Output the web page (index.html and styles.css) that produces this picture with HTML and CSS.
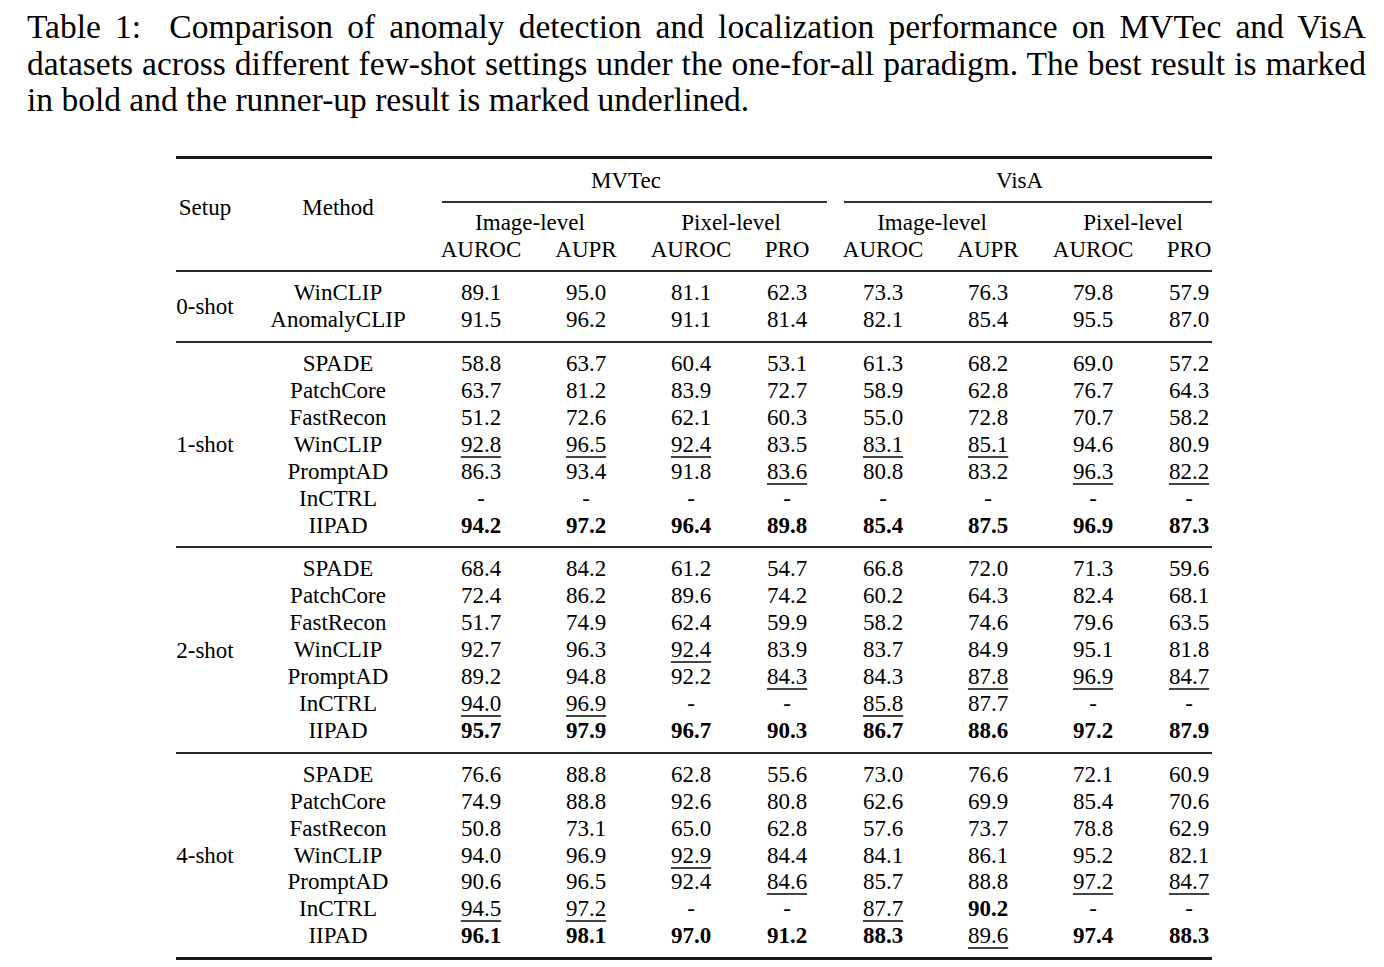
FILE: index.html
```html
<!DOCTYPE html>
<html lang="en">
<head>
<meta charset="utf-8">
<title>Table 1</title>
<link rel="stylesheet" href="styles.css">
</head>
<body>
<div class="page">
  <p class="caption">Table 1:&nbsp; Comparison of anomaly detection and localization performance on MVTec and VisA datasets across different few-shot settings under the one-for-all paradigm. The best result is marked in bold and the runner-up result is marked underlined.</p>

  <table class="results">
    <colgroup>
      <col class="w-setup"><col class="w-method">
      <col class="w-auroc"><col class="w-aupr"><col class="w-auroc"><col class="w-pro">
      <col class="w-auroc"><col class="w-aupr"><col class="w-auroc"><col class="w-pro-last">
    </colgroup>
    <thead>
      <tr class="h-dataset">
        <th rowspan="4" class="setup head-left">Setup</th>
        <th rowspan="4" class="method head-left">Method</th>
        <th colspan="4">MVTec</th>
        <th colspan="4">VisA</th>
      </tr>
      <tr class="h-cmid">
        <td colspan="4" class="cmid"><div class="cmid-line"></div></td>
        <td colspan="4" class="cmid"><div class="cmid-line"></div></td>
      </tr>
      <tr class="h-level">
        <th colspan="2">Image-level</th>
        <th colspan="2">Pixel-level</th>
        <th colspan="2">Image-level</th>
        <th colspan="2" class="last">Pixel-level</th>
      </tr>
      <tr class="h-metric">
        <th>AUROC</th><th>AUPR</th><th>AUROC</th><th>PRO</th>
        <th>AUROC</th><th>AUPR</th><th>AUROC</th><th class="last">PRO</th>
      </tr>
    </thead>
    <tbody>
      <tr><td rowspan="2" class="setup">0-shot</td><td class="method">WinCLIP</td><td>89.1</td><td>95.0</td><td>81.1</td><td>62.3</td><td>73.3</td><td>76.3</td><td>79.8</td><td class="last">57.9</td></tr>
      <tr><td class="method">AnomalyCLIP</td><td>91.5</td><td>96.2</td><td>91.1</td><td>81.4</td><td>82.1</td><td>85.4</td><td>95.5</td><td class="last">87.0</td></tr>
    </tbody>
    <tbody>
      <tr><td rowspan="7" class="setup">1-shot</td><td class="method">SPADE</td><td>58.8</td><td>63.7</td><td>60.4</td><td>53.1</td><td>61.3</td><td>68.2</td><td>69.0</td><td class="last">57.2</td></tr>
      <tr><td class="method">PatchCore</td><td>63.7</td><td>81.2</td><td>83.9</td><td>72.7</td><td>58.9</td><td>62.8</td><td>76.7</td><td class="last">64.3</td></tr>
      <tr><td class="method">FastRecon</td><td>51.2</td><td>72.6</td><td>62.1</td><td>60.3</td><td>55.0</td><td>72.8</td><td>70.7</td><td class="last">58.2</td></tr>
      <tr><td class="method">WinCLIP</td><td><u>92.8</u></td><td><u>96.5</u></td><td><u>92.4</u></td><td>83.5</td><td><u>83.1</u></td><td><u>85.1</u></td><td>94.6</td><td class="last">80.9</td></tr>
      <tr><td class="method">PromptAD</td><td>86.3</td><td>93.4</td><td>91.8</td><td><u>83.6</u></td><td>80.8</td><td>83.2</td><td><u>96.3</u></td><td class="last"><u>82.2</u></td></tr>
      <tr><td class="method">InCTRL</td><td>-</td><td>-</td><td>-</td><td>-</td><td>-</td><td>-</td><td>-</td><td class="last">-</td></tr>
      <tr><td class="method">IIPAD</td><td><b>94.2</b></td><td><b>97.2</b></td><td><b>96.4</b></td><td><b>89.8</b></td><td><b>85.4</b></td><td><b>87.5</b></td><td><b>96.9</b></td><td class="last"><b>87.3</b></td></tr>
    </tbody>
    <tbody>
      <tr><td rowspan="7" class="setup">2-shot</td><td class="method">SPADE</td><td>68.4</td><td>84.2</td><td>61.2</td><td>54.7</td><td>66.8</td><td>72.0</td><td>71.3</td><td class="last">59.6</td></tr>
      <tr><td class="method">PatchCore</td><td>72.4</td><td>86.2</td><td>89.6</td><td>74.2</td><td>60.2</td><td>64.3</td><td>82.4</td><td class="last">68.1</td></tr>
      <tr><td class="method">FastRecon</td><td>51.7</td><td>74.9</td><td>62.4</td><td>59.9</td><td>58.2</td><td>74.6</td><td>79.6</td><td class="last">63.5</td></tr>
      <tr><td class="method">WinCLIP</td><td>92.7</td><td>96.3</td><td><u>92.4</u></td><td>83.9</td><td>83.7</td><td>84.9</td><td>95.1</td><td class="last">81.8</td></tr>
      <tr><td class="method">PromptAD</td><td>89.2</td><td>94.8</td><td>92.2</td><td><u>84.3</u></td><td>84.3</td><td><u>87.8</u></td><td><u>96.9</u></td><td class="last"><u>84.7</u></td></tr>
      <tr><td class="method">InCTRL</td><td><u>94.0</u></td><td><u>96.9</u></td><td>-</td><td>-</td><td><u>85.8</u></td><td>87.7</td><td>-</td><td class="last">-</td></tr>
      <tr><td class="method">IIPAD</td><td><b>95.7</b></td><td><b>97.9</b></td><td><b>96.7</b></td><td><b>90.3</b></td><td><b>86.7</b></td><td><b>88.6</b></td><td><b>97.2</b></td><td class="last"><b>87.9</b></td></tr>
    </tbody>
    <tbody class="final">
      <tr><td rowspan="7" class="setup">4-shot</td><td class="method">SPADE</td><td>76.6</td><td>88.8</td><td>62.8</td><td>55.6</td><td>73.0</td><td>76.6</td><td>72.1</td><td class="last">60.9</td></tr>
      <tr><td class="method">PatchCore</td><td>74.9</td><td>88.8</td><td>92.6</td><td>80.8</td><td>62.6</td><td>69.9</td><td>85.4</td><td class="last">70.6</td></tr>
      <tr><td class="method">FastRecon</td><td>50.8</td><td>73.1</td><td>65.0</td><td>62.8</td><td>57.6</td><td>73.7</td><td>78.8</td><td class="last">62.9</td></tr>
      <tr><td class="method">WinCLIP</td><td>94.0</td><td>96.9</td><td><u>92.9</u></td><td>84.4</td><td>84.1</td><td>86.1</td><td>95.2</td><td class="last">82.1</td></tr>
      <tr><td class="method">PromptAD</td><td>90.6</td><td>96.5</td><td>92.4</td><td><u>84.6</u></td><td>85.7</td><td>88.8</td><td><u>97.2</u></td><td class="last"><u>84.7</u></td></tr>
      <tr><td class="method">InCTRL</td><td><u>94.5</u></td><td><u>97.2</u></td><td>-</td><td>-</td><td><u>87.7</u></td><td><b>90.2</b></td><td>-</td><td class="last">-</td></tr>
      <tr><td class="method">IIPAD</td><td><b>96.1</b></td><td><b>98.1</b></td><td><b>97.0</b></td><td><b>91.2</b></td><td><b>88.3</b></td><td><u>89.6</u></td><td><b>97.4</b></td><td class="last"><b>88.3</b></td></tr>
    </tbody>
  </table>
</div>
</body>
</html>
```

FILE: styles.css
```css
html, body {
  margin: 0;
  padding: 0;
  background: #ffffff;
}

.page {
  width: 1384px;
  height: 967px;
  overflow: hidden;
  font-family: "Liberation Serif", "Times New Roman", serif;
  color: #000;
}

.caption {
  margin: 0;
  padding: 9px 18px 0 27px;
  font-size: 33.5px;
  line-height: 36.5px;
  text-align: justify;
}

.results {
  margin: 37px 0 0 176px;
  width: 1036px;
  table-layout: fixed;
  border-collapse: collapse;
  border-spacing: 0;
  font-size: 23px;
  line-height: 26.9px;
  border-top: 3px solid #1a1a1a;
  border-bottom: 3px solid #1a1a1a;
}

.w-setup { width: 75px; }
.w-method { width: 174px; }
.w-auroc { width: 112px; }
.w-aupr { width: 98px; }
.w-pro { width: 80px; }
.w-pro-last { width: 63px; }

.results th,
.results td {
  padding: 0;
  text-align: center;
  vertical-align: middle;
  font-weight: normal;
  white-space: nowrap;
}

.results .last {
  padding-left: 17px;
}

.results .setup {
  padding-right: 17px;
}

/* header */
.h-dataset th {
  height: 38px;
  padding: 4px 0 0 0;
}

.h-dataset th.head-left {
  vertical-align: top;
  padding-top: 36px;
}

.h-cmid td.cmid {
  height: 2px;
  padding: 0 0 0 17px;
}

.cmid-line {
  height: 2px;
  background: #333;
}

.h-level th {
  padding-top: 7.5px;
}

.h-metric th {
  padding-bottom: 6.5px;
}

/* body groups */
.results tbody {
  border-top: 2px solid #2a2a2a;
}

.results tbody tr:first-child td {
  padding-top: 8px;
}

.results tbody tr:last-child td {
  padding-bottom: 7px;
}

.results tbody td.setup,
.results tbody tr:first-child td.setup {
  padding-top: 2px;
  padding-bottom: 0;
}

.results u {
  text-decoration: underline;
  text-decoration-thickness: 2px;
  text-underline-offset: 4px;
  text-decoration-color: #444;
}

.results b {
  font-weight: bold;
}
```
